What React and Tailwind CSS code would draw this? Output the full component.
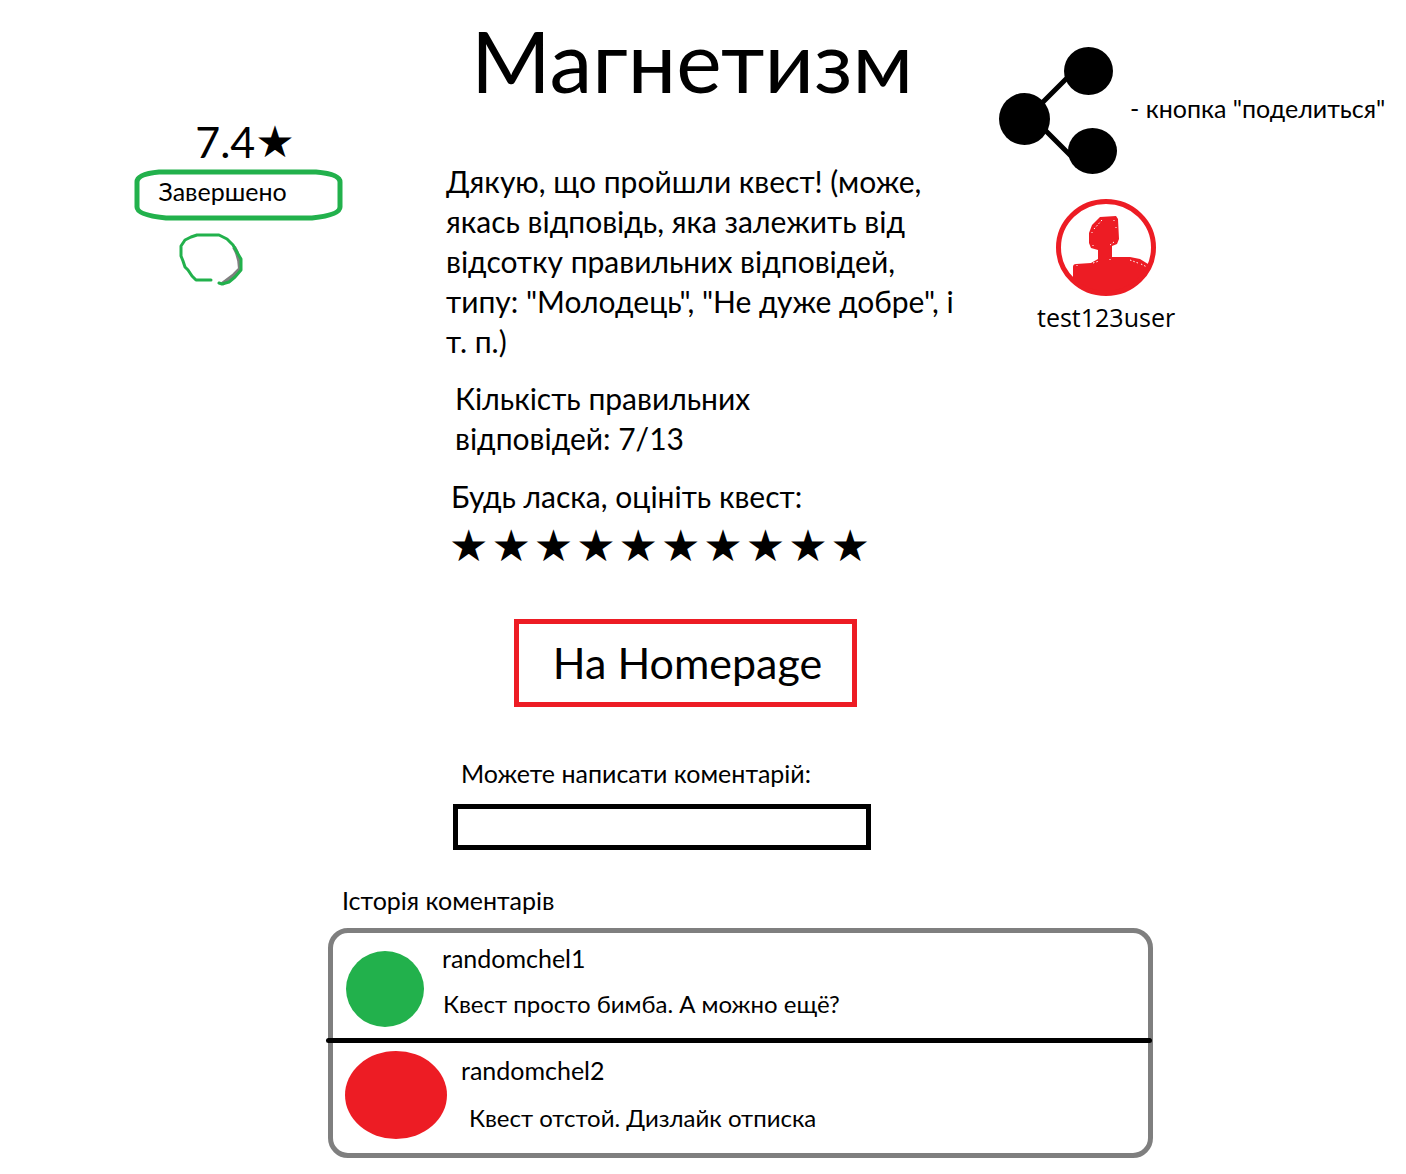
const STAR_COUNT = 10;

const comments = [
  {
    name: "randomchel1",
    text: "Квест просто бимба. А можно ещё?",
    avatar: "mt-[18px] h-[76px] w-[78px] bg-[#22b14c]",
    row: "h-[105px] pl-[13px] gap-[18px]",
    body: "pt-[10px] gap-4",
    indent: "pl-px",
  },
  {
    name: "randomchel2",
    text: "Квест отстой. Дизлайк отписка",
    avatar: "mt-2 h-[88px] w-[102px] bg-[#ed1c24]",
    row: "h-[110px] pl-3 gap-[14px]",
    body: "pt-3 gap-[18px]",
    indent: "pl-2",
  },
];

function ShareIcon() {
  return (
    <svg viewBox="0 0 120 128" className="h-[128px] w-[120px]" aria-hidden="true">
      <path d="M42 58 L70 30 M46 84 L74 112" stroke="#000" strokeWidth="5" fill="none" />
      <ellipse cx="25.500" cy="73" rx="25.500" ry="26" />
      <ellipse cx="89.500" cy="25" rx="24.500" ry="24" />
      <ellipse cx="93.500" cy="105" rx="24.500" ry="23" />
    </svg>
  );
}

function UserAvatar() {
  return (
    <svg viewBox="0 0 100 97" className="h-[97px] w-[100px]" aria-hidden="true">
      <path
        d="M17 68 Q17 65 20 65 L35 64 L42 60 L42 51 L35 49 L33 44 L33 34 L36 26 L44 18 L60 17 L62 20 L63 40 L61 45 L56 47 L56 58 L74 58 L84 60 L92 65 L95 67 L84 82 L68 92 L50 94 L34 92 L17 81 Z"
        fill="#ed1c24"
      />
      <ellipse cx="50" cy="48.500" rx="47.500" ry="46" fill="none" stroke="#ed1c24" strokeWidth="5" />
      <path
        d="M38 30 L46 21 M58 21 V22 M60 28 V29 M36 33 V34 M37 46 V47 M54 46 L58 43 M37 64 L43 62 M54 60 V61 M21 66 V67 M74 61 L82 64 M85 65 L91 68"
        stroke="#fff"
        strokeWidth="1"
        strokeDasharray="1.500 2"
        fill="none"
      />
    </svg>
  );
}

function SketchCircle() {
  return (
    <svg viewBox="0 0 66 54" className="h-[54px] w-[66px]" aria-hidden="true">
      <path d="M55 15 Q61 25 61 37 L55 43 L43 52" stroke="#7f7f7f" strokeWidth="4" fill="none" />
      <path
        d="M32 48 L17 48 L13 44 L9 38 L6 35 L4 29 L2 24 L2 14 L6 8 L12 5 L18 3 L40 3 L48 7 L54 13 L59 22 L62 27 L62 38 L56 45 L50 50 L43 52 L40 51"
        stroke="#22b14c"
        strokeWidth="3"
        strokeLinejoin="round"
        strokeLinecap="round"
        fill="none"
      />
    </svg>
  );
}

function StatusFrame() {
  return (
    <svg
      viewBox="0 0 209 52"
      preserveAspectRatio="none"
      className="absolute inset-0 h-full w-full"
      aria-hidden="true"
    >
      <path
        d="M25 3 H182 Q206 5 206 13 V38 Q206 46 178 49 H32 Q3 46 3 38 V13 Q3 5 25 3 Z"
        stroke="#22b14c"
        strokeWidth="5"
        fill="none"
      />
    </svg>
  );
}

function Star() {
  return <span className="font-['DejaVu_Sans',sans-serif] text-[44px] leading-[48px]">★</span>;
}

export default function App() {
  return (
    <div className="bg-white pb-4 font-[Lato,sans-serif] text-[25px] leading-[30px] text-black">
      <div className="grid grid-cols-[446fr_534fr_426fr]">
        <aside className="flex flex-col items-center pt-[115px] pl-[30px]">
          <div className="flex h-[54px] items-center pl-[14px] text-[43px]">
            7.4
            <Star />
          </div>
          <div className="relative h-[52px] w-[209px] pt-[7px] pl-[25px]">
            <StatusFrame />
            <span className="relative">Завершено</span>
          </div>
          <div className="mt-[11px] pr-[52px]">
            <SketchCircle />
          </div>
        </aside>

        <main className="flex flex-col items-start text-[30px] leading-[40px]">
          <h1 className="h-[161px] pt-[10px] pl-[25px] text-[86px] leading-[100px]">Магнетизм</h1>
          <p className="pr-[10px]">
            Дякую, що пройшли квест! (може, якась відповідь, яка залежить від відсотку правильних
            відповідей, типу: "Молодець", "Не дуже добре", і т. п.)
          </p>
          <p className="mt-[17px] w-[360px] pl-[9px]">Кількість правильних відповідей: 7/13</p>
          <p className="mt-[18px] pl-[5px]">Будь ласка, оцініть квест:</p>
          <div className="mt-[6px] flex w-[424px] justify-between pl-[3px]" role="group" aria-label="Оцінка">
            {Array.from({ length: STAR_COUNT }, (_, i) => (
              <button key={i} type="button" aria-label={`${i + 1}`} className="flex">
                <Star />
              </button>
            ))}
          </div>
          <a
            href="#home"
            className="mt-[49px] ml-[68px] flex h-[88px] w-[343px] items-center justify-center border-[5px] border-[#ed1c24] pl-1 text-[43px]"
          >
            На Homepage
          </a>
          <label htmlFor="comment" className="mt-[51px] pl-[15px] text-[25px] leading-[30px]">
            Можете написати коментарій:
          </label>
          <input
            id="comment"
            type="text"
            className="mt-4 ml-[7px] h-[46px] w-[418px] border-[5px] border-black px-2 text-[25px] outline-none"
          />
        </main>

        <aside className="flex flex-col items-start pt-[46px] pl-[19px]">
          <button type="button" className="flex items-center gap-[11px] whitespace-nowrap">
            <ShareIcon />
            <span className="pb-1">- кнопка "поделиться"</span>
          </button>
          <div className="mt-[25px] ml-[38px] flex flex-col items-center">
            <UserAvatar />
            <span className="mt-[6px] font-['Open_Sans',sans-serif]">test123user</span>
          </div>
        </aside>
      </div>

      <section className="mt-[35px] mr-[18%] ml-[328px]">
        <h2 className="pl-[14px]">Історія коментарів</h2>
        <ul className="mt-[13px] rounded-[20px] border-[5px] border-[#7f7f7f]">
          {comments.map((c, i) => (
            <li key={c.name}>
              {i > 0 && <div className="-mr-1 -ml-[7px] h-[5px] rounded-full bg-black" />}
              <div className={`flex items-start ${c.row}`}>
                <div className={`shrink-0 rounded-[50%] ${c.avatar}`} />
                <div className={`flex flex-col ${c.body}`}>
                  <p>{c.name}</p>
                  <p className={`text-[24px] ${c.indent}`}>{c.text}</p>
                </div>
              </div>
            </li>
          ))}
        </ul>
      </section>
    </div>
  );
}
